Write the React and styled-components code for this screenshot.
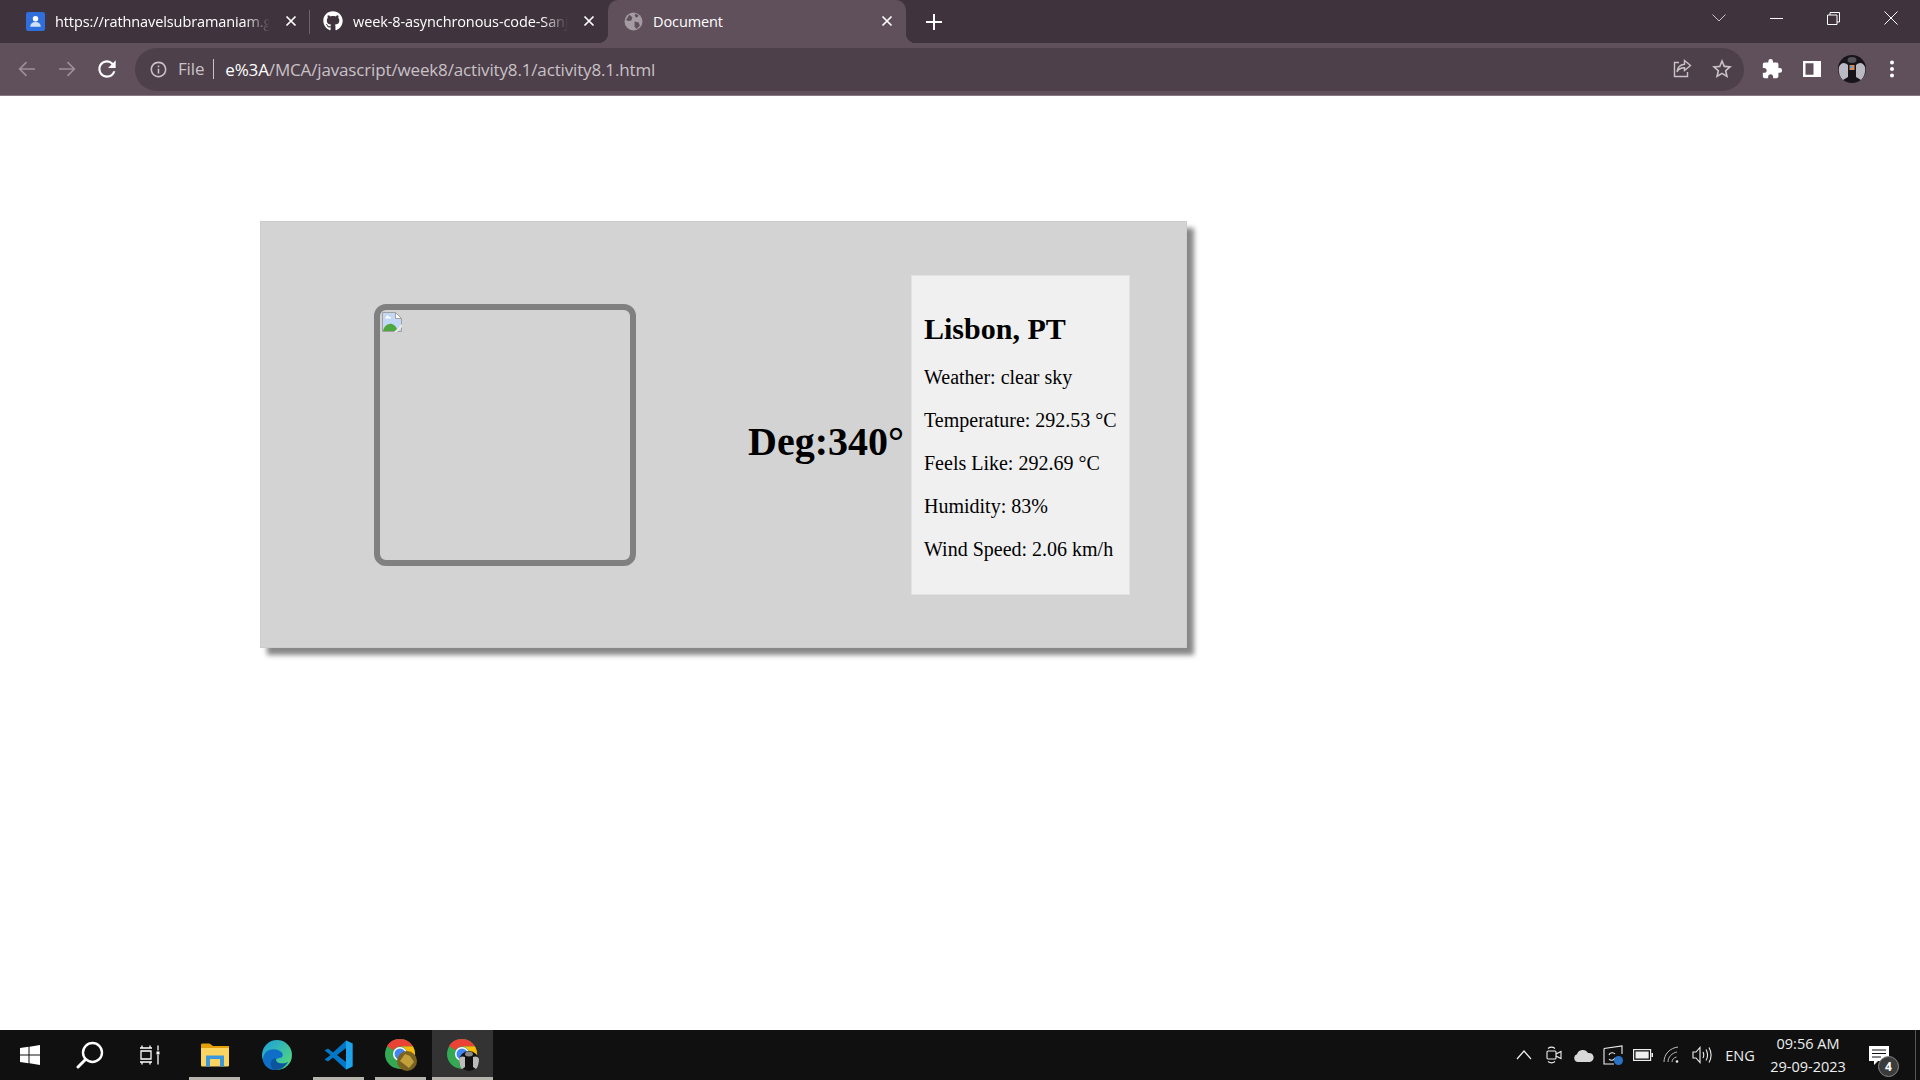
import React from "react"
import styled, { createGlobalStyle } from "styled-components"
import { FaGithub } from "react-icons/fa"
import { MdExtension, MdStarBorder, MdRefresh, MdInfoOutline } from "react-icons/md"

const GlobalStyle = createGlobalStyle`
  html, body {
    margin: 0;
    padding: 0;
    height: 100%;
    overflow: hidden;
    background: #fff;
  }
  * { box-sizing: border-box; }
`

const Screen = styled.div`
  display: flex;
  flex-direction: column;
  width: 1920px;
  height: 1080px;
  font-family: "Open Sans", "Noto Sans", sans-serif;
`

// --- browser top
const TabStrip = styled.div`
  display: flex;
  align-items: stretch;
  height: 43px;
  padding-left: 12px;
  background: #3f333d;
  color: #fff;
`

const Tab = styled.div`
  position: relative;
  display: flex;
  align-items: center;
  width: 298px;
  padding: 0 13px 1px ${(p) => (p.$active ? 15 : 13)}px;
  font-size: 14.5px;
  letter-spacing: -0.1px;
  border-radius: 10px 10px 0 0;
  background: ${(p) => (p.$active ? "#60505b" : "transparent")};

  ${(p) =>
    p.$active &&
    `
    &::before, &::after {
      content: "";
      position: absolute;
      bottom: 0;
      width: 10px;
      height: 10px;
    }
    &::before {
      left: -10px;
      background: radial-gradient(circle at 0 0, transparent 10px, #60505b 10.5px);
    }
    &::after {
      right: -10px;
      background: radial-gradient(circle at 100% 0, transparent 10px, #60505b 10.5px);
    }
  `}

  ${(p) =>
    p.$divider &&
    `
    &::after {
      content: "";
      position: absolute;
      right: 0;
      top: 10px;
      height: 24px;
      width: 1px;
      background: #6d626b;
    }
  `}
`

const TabIcon = styled.span`
  display: flex;
  align-items: center;
  justify-content: center;
  flex: none;
  width: 20px;
  height: 20px;
  margin-right: 10px;
`

const TabTitle = styled.span`
  flex: 1;
  min-width: 0;
  overflow: hidden;
  white-space: nowrap;
  ${(p) => p.$fade && "mask-image: linear-gradient(to right, #000 88%, transparent 100%);"}
`

const TabClose = styled.svg`
  flex: none;
  width: 12px;
  height: 12px;
  margin-left: 15px;
`

const NewTab = styled.svg`
  align-self: center;
  width: 16px;
  height: 16px;
  margin-left: 20px;
`

const WindowControls = styled.div`
  display: flex;
  margin-left: auto;
`

const WindowButton = styled.div`
  display: flex;
  align-items: center;
  justify-content: center;
  width: 57.5px;
  height: 36px;
`

const Toolbar = styled.div`
  display: flex;
  align-items: center;
  height: 53px;
  padding: 0 8px 0 7px;
  background: #60505b;
  border-bottom: 1px solid #85797f;
`

const ToolButton = styled.div`
  display: flex;
  align-items: center;
  justify-content: center;
  flex: none;
  width: 40px;
  height: 40px;
  color: ${(p) => p.$color || "#fff"};
`

const Omnibox = styled.div`
  display: flex;
  align-items: center;
  flex: 1;
  height: 43px;
  margin: 0 8px;
  padding: 0 2px 0 14px;
  border-radius: 22px;
  background: #4d404a;
  font-size: 17px;
  letter-spacing: -0.15px;
  color: #c9c2c7;
`

const OmniInfo = styled.span`
  display: flex;
  color: #c9c2c7;
  margin-right: 10px;
`

const OmniScheme = styled.span`
  padding-right: 9px;
  border-right: 1px solid #c9c2c7;
  line-height: 20px;
`

const OmniUrl = styled.span`
  flex: 1;
  margin-left: 11px;
  b {
    font-weight: 400;
    color: #fff;
  }
`

// --- page
const Page = styled.main`
  flex: 1;
  padding: 125px 0 0 260px;
  background: #fff;
`

const WeatherCard = styled.section`
  display: flex;
  align-items: center;
  width: 927px;
  height: 427px;
  padding-left: 114px;
  background: #d3d3d3;
  border: 1px solid #ccc;
  box-shadow: 7px 7px 5px #888;
  font-family: "Liberation Serif", "Times New Roman", serif;
  color: #000;
`

const IconFrame = styled.div`
  flex: none;
  width: 262px;
  height: 262px;
  margin-left: -1px;
  padding: 2px;
  border: 6px solid #808080;
  border-radius: 12px;
`

const Direction = styled.h1`
  flex: none;
  width: 163px;
  margin: 14px 0 0 112px;
  font-size: 40px;
  font-weight: 700;
  white-space: nowrap;
`

const InfoPanel = styled.div`
  flex: none;
  width: 219px;
  height: 320px;
  padding: 12px 12px;
  background: #f0f0f0;
  border: 1px solid #e2e2e2;
`

const City = styled.h2`
  margin: 24px 0 20px;
  font-size: 30px;
  font-weight: 700;
  line-height: 34px;
`

const Reading = styled.p`
  margin: 20px 0;
  font-size: 20px;
  line-height: 23px;
  white-space: nowrap;
`

// --- taskbar
const Taskbar = styled.footer`
  display: flex;
  align-items: stretch;
  height: 50px;
  background: #101010;
  color: #fff;
`

const TaskSlot = styled.div`
  display: flex;
  align-items: center;
  justify-content: center;
  flex: none;
  width: ${(p) => p.$w || 60}px;
  background: ${(p) => (p.$active ? "#333" : "transparent")};
  border-bottom: 3px solid ${(p) => (p.$open ? "#b5b5ae" : "transparent")};
  border-top: 3px solid transparent;
  margin-right: ${(p) => p.$mr || 0}px;
`

const Tray = styled.div`
  display: flex;
  align-items: center;
  margin-left: auto;
`

const TrayIcon = styled.div`
  display: flex;
  align-items: center;
  justify-content: center;
  width: 29.7px;
`

const TrayLang = styled.div`
  width: 46px;
  text-align: center;
  font-size: 14.5px;
  color: #eee;
`

const Clock = styled.div`
  width: 90px;
  text-align: center;
  font-size: 14.5px;
  line-height: 23px;
  color: #eee;
`

const Notify = styled.div`
  position: relative;
  display: flex;
  align-items: center;
  width: 50px;
  padding-left: 16px;
`

const NotifyBadge = styled.span`
  position: absolute;
  left: 25px;
  top: 10px;
  width: 21px;
  height: 21px;
  border-radius: 50%;
  background: #3b3b3b;
  border: 1px solid #888;
  font-size: 12px;
  font-weight: 700;
  line-height: 19px;
  text-align: center;
`

const ShowDesktop = styled.div`
  align-self: stretch;
  width: 17px;
  &::after {
    content: "";
    display: block;
    width: 1px;
    height: 100%;
    margin-left: 12px;
    background: #555;
  }
`

// --- drawings
const CloseGlyph = ({ color = "#fff" }) => (
  <TabClose viewBox="0 0 12 12">
    <path d="M1.500 1.500l9 9M10.500 1.500l-9 9" stroke={color} strokeWidth="1.700" />
  </TabClose>
)

const ContactsIcon = () => (
  <svg width="19" height="19" viewBox="0 0 18 18">
    <rect width="18" height="18" rx="2" fill="#2f6fdc" />
    <circle cx="9" cy="6.500" r="2.600" fill="#fff" />
    <path d="M4 14c0-3 2-4.500 5-4.500s5 1.500 5 4.500z" fill="#cfe0fb" />
  </svg>
)

const GlobeIcon = () => (
  <svg width="19" height="19" viewBox="0 0 18 18">
    <circle cx="9" cy="9" r="8.500" fill="#a59ca3" />
    <path d="M5 2.500l3 2.500-1 3-3 .5-2-1zM10 9l4 1 1 3-3 3-2-2zM11 1.500l3 2-2 2-2-2z" fill="#60505b" />
  </svg>
)

const NavArrow = ({ flip }) => (
  <svg width="18" height="16" viewBox="0 0 18 16" fill="none" stroke="#9b9098" strokeWidth="1.700" style={flip ? { transform: "scaleX(-1)" } : undefined}>
    <path d="M17 8H2M8.500 1.200L1.700 8l6.800 6.800" />
  </svg>
)

const ShareIcon = () => (
  <svg width="20" height="20" viewBox="0 0 20 20" fill="none" stroke="#c9c2c7" strokeWidth="1.400">
    <path d="M7 3.500H2.500v14h13V13" />
    <path d="M12.500 1.500L18.500 6.500l-6 5V8.800c-3.500 0-6 1.200-7.500 4 .5-4.500 3-7 7.500-7.500z" />
  </svg>
)

const SidePanelIcon = () => (
  <svg width="18" height="18" viewBox="0 0 18 18">
    <path fillRule="evenodd" d="M0 1h18v16H0zM2.500 3.200v11.600h8V3.200z" fill="#fff" />
  </svg>
)

const AvatarIcon = ({ size = 28 }) => (
  <svg width={size} height={size} viewBox="0 0 28 28">
    <circle cx="14" cy="14" r="14" fill="#17151a" />
    <path d="M1 12c2-5 6-5 9-2v12l-5 3C2 22 0 17 1 12zM27 12c-2-5-6-5-9-2v12l5 3c3-3 5-8 4-13z" fill="#b9bac4" />
    <ellipse cx="14" cy="5" rx="4.500" ry="3" fill="#55525c" />
    <rect x="11.500" y="10" width="5" height="5" fill="#d98a5c" />
    <rect x="12" y="11" width="2" height="2" fill="#3aa3d8" />
  </svg>
)

const WindowsLogo = () => (
  <svg width="20" height="20" viewBox="0 0 20 20" fill="#fff">
    <path d="M0 3l8.500-1.200V9.500H0zM9.500 1.700L20 0v9.500H9.500zM0 10.500h8.500v7.700L0 17zM9.500 10.500H20V20L9.500 18.300z" />
  </svg>
)

const SearchLogo = () => (
  <svg width="28" height="28" viewBox="0 0 28 28" fill="none" stroke="#fff">
    <circle cx="16.500" cy="11.500" r="9.500" strokeWidth="2.400" />
    <path d="M9.500 18.500L2 26" strokeWidth="3" strokeLinecap="round" />
  </svg>
)

const TaskViewLogo = () => (
  <svg width="22" height="20" viewBox="0 0 22 20" fill="none" stroke="#fff" strokeWidth="1.300">
    <path d="M1 3h12M3 0.500v2.500M11 0.500v2.500M2 6h10v8H2zM1 17h12M3 17v2.500M11 17v2.500M19 0.500v5M19 10v9.500" />
    <rect x="17.500" y="6.500" width="3" height="3" fill="#fff" stroke="none" />
  </svg>
)

const FolderLogo = () => (
  <svg width="28" height="24" viewBox="0 0 28 24">
    <path d="M0 2c0-1 .6-1.500 1.500-1.500h7L12 3h16v4H0z" fill="#e3a008" />
    <path d="M0 5h28v17c0 1-.6 1.500-1.500 1.500h-25C.6 23.500 0 23 0 22z" fill="#fcd462" />
    <path d="M5 12.500h18v11h-4V16H9v7.500H5z" fill="#3a96dd" />
  </svg>
)

const EdgeLogo = () => (
  <svg width="30" height="30" viewBox="0 0 30 30">
    <defs>
      <linearGradient id="edgeTop" x1="0" y1="0" x2="1" y2="1">
        <stop offset="0" stopColor="#1b9de2" />
        <stop offset="1" stopColor="#5ade6e" />
      </linearGradient>
    </defs>
    <circle cx="15" cy="15" r="15" fill="url(#edgeTop)" />
    <path d="M1 19C2 10 10 8 16 10c4 1.500 6 5 4 7-2 1.500-6 1-6 3 0 3 6 5 12 2-3 5-8 8-13 8-7 0-12-5-12-11z" fill="#0f6fc6" />
    <path d="M14 20c0 3 6 5 12 2-3 5-8 8-13 8-3 0-5-4-4-8 1-3 5-5 5-2z" fill="#0c559c" />
  </svg>
)

const VSCodeLogo = () => (
  <svg width="30" height="30" viewBox="0 0 30 30">
    <path d="M22 0.500L28.500 3.500v23L22 29.500 9 17.500l-5 4-3.500-2 6-4.500-6-4.500 3.500-2 5 4z" fill="#0078c8" />
    <path d="M22 0.500L28.500 3.500v23L22 29.500z" fill="#1fa3ea" />
    <path d="M22 8L13 15l9 7z" fill="#101010" />
  </svg>
)

const ChromeLogo = ({ children }) => (
  <svg width="32" height="32" viewBox="0 0 32 32">
    <circle cx="15" cy="15" r="15" fill="#34a853" />
    <path d="M15 0a15 15 0 0 1 13 7.500H15A7.500 7.500 0 0 0 8.500 11.300L2 7A15 15 0 0 1 15 0z" fill="#ea4335" />
    <path d="M28 7.500A15 15 0 0 1 15 30l6.500-11.300A7.500 7.500 0 0 0 15 7.500z" fill="#fbbc05" />
    <circle cx="15" cy="15" r="7" fill="#fff" />
    <circle cx="15" cy="15" r="5.500" fill="#4285f4" />
    {children}
  </svg>
)

const TrayChevron = () => (
  <svg width="16" height="10" viewBox="0 0 16 10" fill="none" stroke="#eee" strokeWidth="1.200"><path d="M1 9l7-8 7 8" /></svg>
)
const TrayMeet = () => (
  <svg width="16" height="18" viewBox="0 0 16 18" fill="none" stroke="#eee" strokeWidth="1.100">
    <rect x="1" y="5" width="9" height="8" rx="1" />
    <path d="M10 8l5-2.500v7L10 10M2 2.500c2-1.500 5-1.500 7 0M2 15.500c2 1.500 5 1.500 7 0" />
  </svg>
)
const TrayCloud = () => (
  <svg width="21" height="13" viewBox="0 0 21 13">
    <path d="M5 13a4 4 0 0 1-1-7.800A6 6 0 0 1 15 4a4.500 4.500 0 0 1 2 9z" fill="#d8d8d8" />
  </svg>
)
const TrayUpdate = () => (
  <svg width="20" height="20" viewBox="0 0 20 20" fill="none" stroke="#eee" strokeWidth="1.100">
    <path d="M1 3.500L19 1v8M1 3.500V19h10" />
    <path d="M6 10a3.500 3.500 0 0 1 6-1M12 13a3.500 3.500 0 0 1-6 1" />
    <circle cx="15.500" cy="15.500" r="4.500" fill="#2a73c5" stroke="none" />
  </svg>
)
const TrayBattery = () => (
  <svg width="20" height="12" viewBox="0 0 20 12">
    <rect x=".6" y=".6" width="17" height="10.800" fill="none" stroke="#eee" strokeWidth="1.200" />
    <rect x="2.500" y="2.500" width="13.200" height="7" fill="#eee" />
    <rect x="18.500" y="4" width="1.500" height="4" fill="#eee" />
  </svg>
)
const TrayWifi = () => (
  <svg width="18" height="18" viewBox="0 0 18 18" fill="none" stroke="#bbb" strokeWidth="1">
    <path d="M1 16C1 8 7 2 15 1M5 16c0-5 4-9 9-10M9 16c0-2.500 2-4.500 4.500-5" />
    <circle cx="14" cy="15.500" r="1.300" fill="#eee" stroke="none" />
  </svg>
)
const TrayVolume = () => (
  <svg width="20" height="18" viewBox="0 0 20 18" fill="none" stroke="#eee" strokeWidth="1.100">
    <path d="M1 6h3l4-4.500v15L4 12H1zM11 6c1 2 1 4 0 6M14 3.500c2 3.500 2 7.500 0 11M17 1.500c2.800 5 2.800 10 0 15" />
  </svg>
)
const TrayNotify = () => (
  <svg width="20" height="19" viewBox="0 0 20 19">
    <path d="M0 0h20v15H9l-4 4v-4H0z" fill="#fff" />
    <path d="M3 4h14M3 7.500h14M3 11h9" stroke="#101010" strokeWidth="1" />
  </svg>
)

const BrokenImage = () => (
  <svg width="20" height="20" viewBox="0 0 20 20">
    <path d="M.5.500h13l6 6v13H.5z" fill="#c3d8f6" stroke="#a0a0a0" />
    <path d="M13.500.500v6h6z" fill="#fff" stroke="#a0a0a0" />
    <path d="M1 19c1-5 5-8 9-7 3 1 5 4 6 7z" fill="#4fa83d" />
    <path d="M12 20l8-8v3l-5 5z" fill="#e8e8e8" />
    <path d="M4 5a1.500 1.500 0 0 1 3 0h2v1.500H3z" fill="#fff" />
  </svg>
)

const readings = [
  "Weather: clear sky",
  "Temperature: 292.53 °C",
  "Feels Like: 292.69 °C",
  "Humidity: 83%",
  "Wind Speed: 2.06 km/h",
]

export default function App() {
  return (
    <Screen>
      <GlobalStyle />
      <TabStrip>
        <Tab $divider>
          <TabIcon><ContactsIcon /></TabIcon>
          <TabTitle $fade>https://rathnavelsubramaniam.github.io</TabTitle>
          <CloseGlyph />
        </Tab>
        <Tab>
          <TabIcon><FaGithub size={20} color="#fff" /></TabIcon>
          <TabTitle $fade>week-8-asynchronous-code-Sanjay</TabTitle>
          <CloseGlyph />
        </Tab>
        <Tab $active>
          <TabIcon><GlobeIcon /></TabIcon>
          <TabTitle>Document</TabTitle>
          <CloseGlyph />
        </Tab>
        <NewTab viewBox="0 0 16 16">
          <path d="M8 0v16M0 8h16" stroke="#fff" strokeWidth="2" />
        </NewTab>
        <WindowControls>
          <WindowButton>
            <svg width="14" height="8" viewBox="0 0 14 8" fill="none" stroke="#c9c2c7" strokeWidth="1"><path d="M.5.500L7 7l6.500-6.500" /></svg>
          </WindowButton>
          <WindowButton>
            <svg width="13" height="1" viewBox="0 0 13 1"><rect width="13" height="1" fill="#fff" /></svg>
          </WindowButton>
          <WindowButton>
            <svg width="13" height="13" viewBox="0 0 13 13" fill="none" stroke="#fff" strokeWidth="1"><path d="M.5 3h9.500v9.500H.5zM3 3V.5h9.500V10H10" /></svg>
          </WindowButton>
          <WindowButton>
            <svg width="14" height="14" viewBox="0 0 14 14" fill="none" stroke="#fff" strokeWidth="1"><path d="M.5.500l13 13M13.500.500l-13 13" /></svg>
          </WindowButton>
        </WindowControls>
      </TabStrip>
      <Toolbar>
        <ToolButton><NavArrow /></ToolButton>
        <ToolButton><NavArrow flip /></ToolButton>
        <ToolButton><MdRefresh size={26} /></ToolButton>
        <Omnibox>
          <OmniInfo><MdInfoOutline size={19} /></OmniInfo>
          <OmniScheme>File</OmniScheme>
          <OmniUrl><b>e%3A</b>/MCA/javascript/week8/activity8.1/activity8.1.html</OmniUrl>
          <ToolButton><ShareIcon /></ToolButton>
          <ToolButton $color="#c9c2c7"><MdStarBorder size={24} /></ToolButton>
        </Omnibox>
        <ToolButton><MdExtension size={22} /></ToolButton>
        <ToolButton><SidePanelIcon /></ToolButton>
        <ToolButton><AvatarIcon /></ToolButton>
        <ToolButton>
          <svg width="4" height="18" viewBox="0 0 4 18" fill="#fff">
            <circle cx="2" cy="2.500" r="2" /><circle cx="2" cy="9" r="2" /><circle cx="2" cy="15.500" r="2" />
          </svg>
        </ToolButton>
      </Toolbar>

      <Page>
        <WeatherCard>
          <IconFrame><BrokenImage /></IconFrame>
          <Direction>Deg:340°</Direction>
          <InfoPanel>
            <City>Lisbon, PT</City>
            {readings.map((r) => (
              <Reading key={r}>{r}</Reading>
            ))}
          </InfoPanel>
        </WeatherCard>
      </Page>

      <Taskbar>
        <TaskSlot $w={60}><WindowsLogo /></TaskSlot>
        <TaskSlot $w={60}><SearchLogo /></TaskSlot>
        <TaskSlot $w={60} $mr={9}><TaskViewLogo /></TaskSlot>
        <TaskSlot $w={51} $open $mr={11}><FolderLogo /></TaskSlot>
        <TaskSlot $w={51} $mr={11}><EdgeLogo /></TaskSlot>
        <TaskSlot $w={51} $open $mr={11}><VSCodeLogo /></TaskSlot>
        <TaskSlot $w={51} $open $mr={6}>
          <ChromeLogo>
            <circle cx="22" cy="22" r="10" fill="#7a6222" />
            <path d="M15 22l5-7 5 2 4 6-5 6z" fill="#c2a13a" />
          </ChromeLogo>
        </TaskSlot>
        <TaskSlot $w={61} $open $active>
          <ChromeLogo>
            <circle cx="22" cy="22" r="10" fill="#111" />
            <path d="M12 20c1-3 4-3 6-2v10l-3 2c-2-2-3-6-3-10zM32 20c-1-3-4-3-6-2v10l3 2c2-2 3-6 3-10z" fill="#bbb" />
            <ellipse cx="22" cy="15" rx="4" ry="2.500" fill="#888" />
          </ChromeLogo>
        </TaskSlot>
        <Tray>
          <TrayIcon><TrayChevron /></TrayIcon>
          <TrayIcon><TrayMeet /></TrayIcon>
          <TrayIcon><TrayCloud /></TrayIcon>
          <TrayIcon><TrayUpdate /></TrayIcon>
          <TrayIcon><TrayBattery /></TrayIcon>
          <TrayIcon><TrayWifi /></TrayIcon>
          <TrayIcon><TrayVolume /></TrayIcon>
          <TrayLang>ENG</TrayLang>
          <Clock>09:56 AM<br />29-09-2023</Clock>
          <Notify>
            <TrayNotify />
            <NotifyBadge>4</NotifyBadge>
          </Notify>
          <ShowDesktop />
        </Tray>
      </Taskbar>
    </Screen>
  )
}
